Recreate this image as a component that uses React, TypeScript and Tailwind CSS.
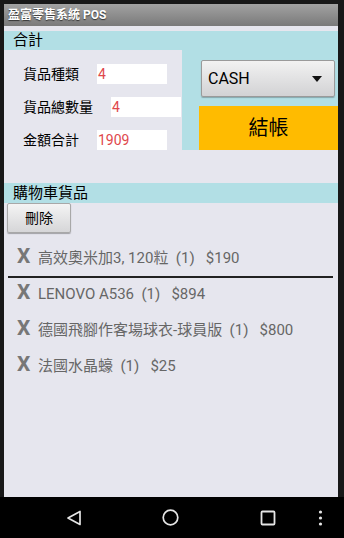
import React from 'react';

const font = { fontFamily: "Roboto, 'Noto Sans CJK TC', sans-serif" };

const items = [
  '高效奧米加3, 120粒  (1)   $190',
  'LENOVO A536  (1)   $894',
  '德國飛腳作客場球衣-球員版  (1)   $800',
  '法國水晶蠔  (1)   $25',
];

function Field({ label, value, gap }: { label: string; value: string; gap: string }) {
  return (
    <div className="flex items-center h-[20px]">
      <span className="ml-[19px] text-[14px] text-black leading-none">{label}</span>
      <div className={`${gap} w-[70px] h-[20px] bg-white flex items-center pl-[1px] text-[14px] text-[#e0474c]`}>
        {value}
      </div>
    </div>
  );
}

export default function App() {
  return (
    <div className="w-[344px] h-[538px] bg-black flex flex-col whitespace-pre" style={font}>
      <div className="flex-1 flex flex-col bg-[#181818] pt-[4px] pl-[4px] pr-[6px] min-h-0">
        {/* Title bar */}
        <div className="h-[22px] bg-gradient-to-b from-[#a2a2a2] to-[#7a7a7a] flex items-center pl-[4px]">
          <span className="text-white font-bold text-[12px] [text-shadow:0_1px_1px_#333]">盈富零售系統 POS</span>
        </div>
        <div className="h-[5px] bg-[#e6e6ee]" />

        {/* 合計 */}
        <div className="h-[19px] bg-[#b2dfe5] flex items-center pl-[9px] text-[15px] text-black">合計</div>
        <div className="flex h-[100px]">
          <div className="w-[178px] bg-[#e6e6ee] flex flex-col pt-[14px] gap-[13px]">
            <Field label="貨品種類" value="4" gap="ml-[18px]" />
            <Field label="貨品總數量" value="4" gap="ml-[18px]" />
            <Field label="金額合計" value="1909" gap="ml-[18px]" />
          </div>
          <div className="flex-1 bg-[#b2dfe5] flex flex-col">
            <div className="mt-[10px] ml-[19px] mr-[3px] h-[37px] rounded-[2px] border border-[#9a9a9a] bg-gradient-to-b from-[#f2f2f2] to-[#d2d2d4] flex items-center justify-between pl-[6px] pr-[12px] shadow-[0_1px_1px_rgba(0,0,0,0.25)]">
              <span className="text-[16px] text-black">CASH</span>
              <svg width="10" height="6" viewBox="0 0 10 6"><path d="M0 0h10L5 6z" fill="#111" /></svg>
            </div>
            <div className="mt-[9px] ml-[17px] h-[44px] bg-[#ffbb00] flex items-center justify-center text-[20px] text-black">結帳</div>
          </div>
        </div>

        <div className="h-[33px] bg-[#e6e6ee]" />

        {/* 購物車貨品 */}
        <div className="h-[20px] bg-[#b2dfe5] flex items-center pl-[9px] text-[15px] text-black">購物車貨品</div>
        <div className="flex-1 bg-[#e6e6ee] flex flex-col">
          <div className="ml-[3px] w-[64px] h-[30px] rounded-[2px] border border-[#a8a8a8] bg-gradient-to-b from-[#f4f4f4] to-[#d6d6d8] flex items-center justify-center text-[14px] text-black shadow-[0_1px_1px_rgba(0,0,0,0.3)]">
            刪除
          </div>
          {items.map((t, i) => (
            <React.Fragment key={i}>
              <div className={`flex items-baseline pl-[13px] ${i === 0 ? 'h-[43px] pt-[13px]' : 'h-[36px] pt-[4px]'}`}>
                <span className="text-[21px] leading-[20px] font-bold text-[#777] w-[21px]">X</span>
                <span className="text-[15px] leading-[20px] text-[#666]">{t}</span>
              </div>
              {i === 0 && <div className="ml-[4px] mr-[5px] h-[1.5px] bg-[#222]" />}
            </React.Fragment>
          ))}
        </div>
      </div>

      {/* Nav bar */}
      <div className="h-[41px] bg-black flex items-center relative">
        <svg className="absolute left-[66px] top-[13px]" width="16" height="16" viewBox="0 0 16 16">
          <path d="M14 1.5v13L2 8z" fill="none" stroke="#e6e6e6" strokeWidth="1.7" strokeLinejoin="round" />
        </svg>
        <svg className="absolute left-[162px] top-[12px]" width="17" height="17" viewBox="0 0 17 17">
          <circle cx="8.5" cy="8.5" r="7.3" fill="none" stroke="#e6e6e6" strokeWidth="1.7" />
        </svg>
        <svg className="absolute left-[260px] top-[13px]" width="16" height="16" viewBox="0 0 16 16">
          <rect x="1.5" y="1.5" width="13" height="13" fill="none" stroke="#e6e6e6" strokeWidth="1.8" rx="1" />
        </svg>
        <svg className="absolute left-[318px] top-[12px]" width="5" height="18" viewBox="0 0 5 18">
          <circle cx="2.5" cy="3" r="1.6" fill="#e6e6e6" />
          <circle cx="2.5" cy="9" r="1.6" fill="#e6e6e6" />
          <circle cx="2.5" cy="15" r="1.6" fill="#e6e6e6" />
        </svg>
      </div>
    </div>
  );
}
